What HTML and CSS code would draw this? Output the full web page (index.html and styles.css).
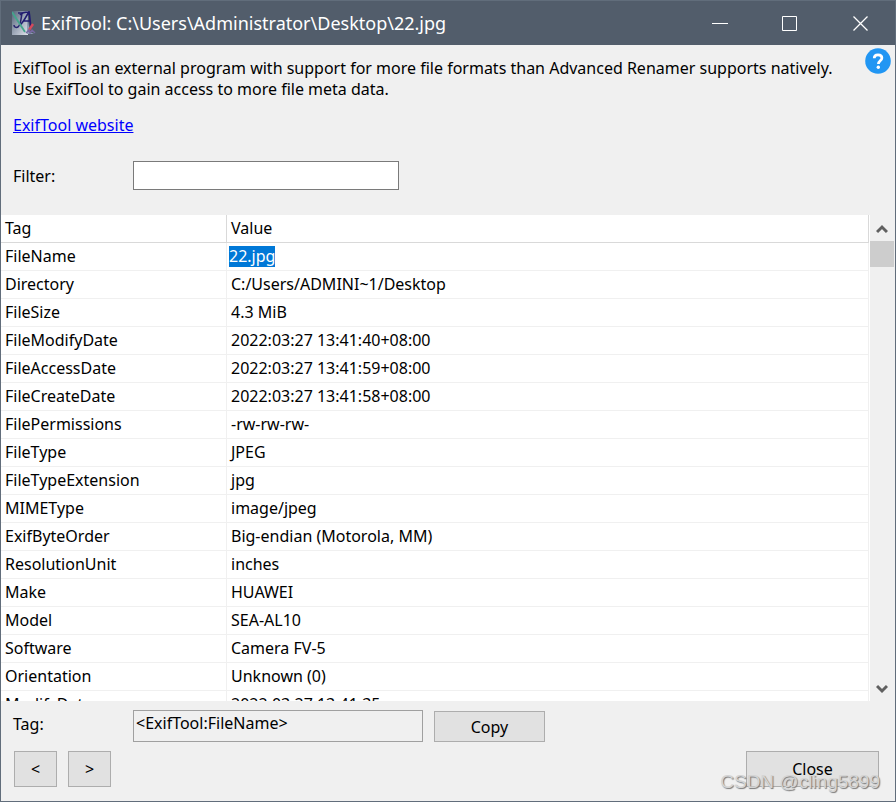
FILE: index.html
```html
<!DOCTYPE html>
<html lang="en">
<head>
<meta charset="utf-8">
<title>ExifTool: C:\Users\Administrator\Desktop\22.jpg</title>
<link rel="stylesheet" href="styles.css">
</head>
<body>
<div class="window">
  <header class="titlebar">
    <svg class="app-icon" viewBox="0 0 24 24" aria-hidden="true">
      <defs><linearGradient id="page" x1="0" y1="0" x2="1" y2="1"><stop offset="0" stop-color="#566579"/><stop offset=".55" stop-color="#a3adbd"/><stop offset="1" stop-color="#e0e3ea"/></linearGradient></defs>
      <path d="M0 0h16v24H0z" fill="url(#page)"/>
      <path d="M15 4l3 17 4 2h-7z" fill="#8d9bb5"/>
      <path d="M6 2h4c-1 5-1 12-4 14-2 1-4 0-4-2" fill="none" stroke="#29246e" stroke-width="1.500"/>
      <path d="M8 14C12 11 14 5 17 1c1 5 1 10 2 16M11 10h7M8 4c2-3 6-3 9-3" fill="none" stroke="#211c70" stroke-width="1.700"/>
      <path d="M0 1l13 20" stroke="#43a58c" stroke-width="1.800"/>
      <path d="M17 19l4-6" stroke="#d54a5c" stroke-width="2.400"/>
      <path d="M14 22l3-3 1 3 2-3 3 3" fill="none" stroke="#7768a1" stroke-width="1.400"/>
    </svg>
    <h1 class="title">ExifTool: C:\Users\Administrator\Desktop\22.jpg</h1>
    <div class="caption-buttons">
      <button class="caption" aria-label="Minimize"><svg viewBox="0 0 16 16"><path d="M0 8.500h16"/></svg></button>
      <button class="caption" aria-label="Maximize"><svg viewBox="0 0 16 16"><path d="M.5 1.500h14v14H.5z"/></svg></button>
      <button class="caption" aria-label="Close window"><svg viewBox="0 0 16 16"><path d="M1.500 1.500l14 14M15.500 1.500l-14 14" stroke-width="1.300"/></svg></button>
    </div>
  </header>

  <section class="intro">
    <button class="help" aria-label="Help"><svg viewBox="0 0 26 26"><circle cx="13" cy="13" r="12.800" fill="#2196f3"/><path d="M9.200 10.200C9.200 7.700 10.800 6.800 13 6.800s3.900 1.100 3.900 3.200c0 2.800-3.500 2.900-3.500 6" fill="none" stroke="#fff" stroke-width="2.700"/><circle cx="13.300" cy="19.300" r="1.700" fill="#fff"/></svg></button>
    <p>ExifTool is an external program with support for more file formats than Advanced Renamer supports natively.<br>Use ExifTool to gain access to more file meta data.</p>
    <p class="site"><a href="#">ExifTool website</a></p>
    <div class="filter"><label for="filter">Filter:</label><input id="filter" type="text"></div>
  </section>

  <main class="grid">
    <div class="rows">
      <table>
        <thead><tr><th>Tag</th><th>Value</th></tr></thead>
        <tbody>
          <tr><td>FileName</td><td class="editing"><mark>22.jpg</mark></td></tr>
          <tr><td>Directory</td><td>C:/Users/ADMINI~1/Desktop</td></tr>
          <tr><td>FileSize</td><td>4.3 MiB</td></tr>
          <tr><td>FileModifyDate</td><td>2022:03:27 13:41:40+08:00</td></tr>
          <tr><td>FileAccessDate</td><td>2022:03:27 13:41:59+08:00</td></tr>
          <tr><td>FileCreateDate</td><td>2022:03:27 13:41:58+08:00</td></tr>
          <tr><td>FilePermissions</td><td>-rw-rw-rw-</td></tr>
          <tr><td>FileType</td><td>JPEG</td></tr>
          <tr><td>FileTypeExtension</td><td>jpg</td></tr>
          <tr><td>MIMEType</td><td>image/jpeg</td></tr>
          <tr><td>ExifByteOrder</td><td>Big-endian (Motorola, MM)</td></tr>
          <tr><td>ResolutionUnit</td><td>inches</td></tr>
          <tr><td>Make</td><td>HUAWEI</td></tr>
          <tr><td>Model</td><td>SEA-AL10</td></tr>
          <tr><td>Software</td><td>Camera FV-5</td></tr>
          <tr><td>Orientation</td><td>Unknown (0)</td></tr>
          <tr><td>ModifyDate</td><td>2022:03:27 13:41:35</td></tr>
        </tbody>
      </table>
    </div>
    <div class="scrollbar">
      <button class="arrow" aria-label="Scroll up"><svg viewBox="0 0 12 10"><path d="M1 8l5-5 5 5"/></svg></button>
      <div class="thumb"></div>
      <button class="arrow down" aria-label="Scroll down"><svg viewBox="0 0 12 10"><path d="M1 2l5 5 5-5"/></svg></button>
    </div>
  </main>

  <footer class="footer">
    <div class="tag-line">
      <label for="tag">Tag:</label>
      <input id="tag" type="text" readonly value="&lt;ExifTool:FileName&gt;">
      <button class="btn copy">Copy</button>
    </div>
    <div class="actions">
      <button class="btn nav">&lt;</button>
      <button class="btn nav">&gt;</button>
      <button class="btn close">Close</button>
    </div>
  </footer>
  <div class="watermark">CSDN @cling5899</div>
</div>
</body>
</html>
```
FILE: styles.css
```css
* { box-sizing: border-box; }

body {
  margin: 0;
  font: 16px/21px "Noto Sans", "Open Sans", sans-serif;
  color: #000;
}

button, input { font: inherit; color: inherit; margin: 0; border-radius: 0; }

.window {
  position: relative;
  display: flex;
  flex-direction: column;
  height: 100vh;
  border: 1px solid #616d7b;
  background: #f0f0f0;
}

.titlebar {
  display: flex;
  align-items: center;
  flex: none;
  height: 44px;
  padding-left: 11px;
  background: #525d6b;
  color: #fff;
}
.app-icon { width: 24px; height: 24px; }
.title {
  flex: 1;
  margin: 0 0 0 5px;
  font: 18px/26px "Noto Sans", "Open Sans", sans-serif;
  white-space: nowrap;
}
.caption-buttons { display: flex; }
.caption {
  display: grid;
  place-items: center;
  width: 70px;
  height: 44px;
  padding: 0;
  border: 0;
  background: none;
}
.caption svg { width: 16px; height: 16px; overflow: visible; fill: none; stroke: #fff; }

.intro { position: relative; flex: none; padding: 13px 12px 25px; }
.intro p { margin: 0; }
.intro .site { margin-top: 15px; }
.site a { color: #00f; }
.help {
  position: absolute;
  top: 3px;
  right: 4px;
  width: 26px;
  height: 26px;
  padding: 0;
  border: 0;
  background: none;
}
.help svg { display: block; width: 26px; height: 26px; }
.filter { display: flex; align-items: center; margin-top: 25px; }
.filter label, .tag-line label { width: 120px; }
.filter label { padding-top: 2px; }
.filter input {
  width: 266px;
  height: 29px;
  padding: 0 4px;
  border: 1px solid #7a7a7a;
  background: #fff;
}

.grid { display: flex; flex: 1; min-height: 0; background: #fff; }
.rows { flex: 1; overflow: hidden; padding-right: 1px; }
table { width: 100%; border-collapse: separate; border-spacing: 0; table-layout: fixed; }
th, td {
  height: 28px;
  padding: 0 4px;
  border-right: 1px solid #f0f0f0;
  border-bottom: 1px solid #f0f0f0;
  font-weight: normal;
  text-align: left;
  white-space: nowrap;
}
th { border-color: #d9d9d9; }
th:first-child { width: 226px; }
td.editing { padding-left: 2px; }
mark { display: inline-block; background: #0078d7; color: #fff; }

.scrollbar {
  display: flex;
  flex-direction: column;
  flex: none;
  width: 25px;
  padding-right: 1px;
  background: #f0f0f0;
}
.arrow {
  display: grid;
  place-items: center;
  height: 26px;
  padding: 2px 0 0;
  border: 0;
  background: none;
}
.arrow svg { width: 12px; height: 10px; fill: none; stroke: #606060; stroke-width: 3; }
.thumb { height: 26px; background: #cdcdcd; }
.down { margin-top: auto; }

.footer { flex: none; padding: 9px 16px 14px 12px; }
.tag-line { display: flex; }
#tag {
  width: 290px;
  height: 32px;
  padding: 0 2px 6px;
  border: 1px solid #a0a0a0;
  background: #f0f0f0;
}
.tag-line label { padding-top: 4px; }
.btn { padding: 0; border: 1px solid #adadad; background: #e1e1e1; }
.copy { width: 111px; height: 31px; margin: 1px 0 0 11px; padding-top: 2px; }
.actions { display: flex; gap: 11px; margin: 9px 0 0 1px; }
.nav { width: 43px; height: 36px; }
.close { width: 133px; height: 36px; margin-left: auto; }

.watermark {
  position: absolute;
  right: 15px;
  bottom: 7px;
  font: 19px/24px "Liberation Sans", sans-serif;
  color: #d4d4d4;
  text-shadow: 1px 1px 1px #777;
  pointer-events: none;
}
```
